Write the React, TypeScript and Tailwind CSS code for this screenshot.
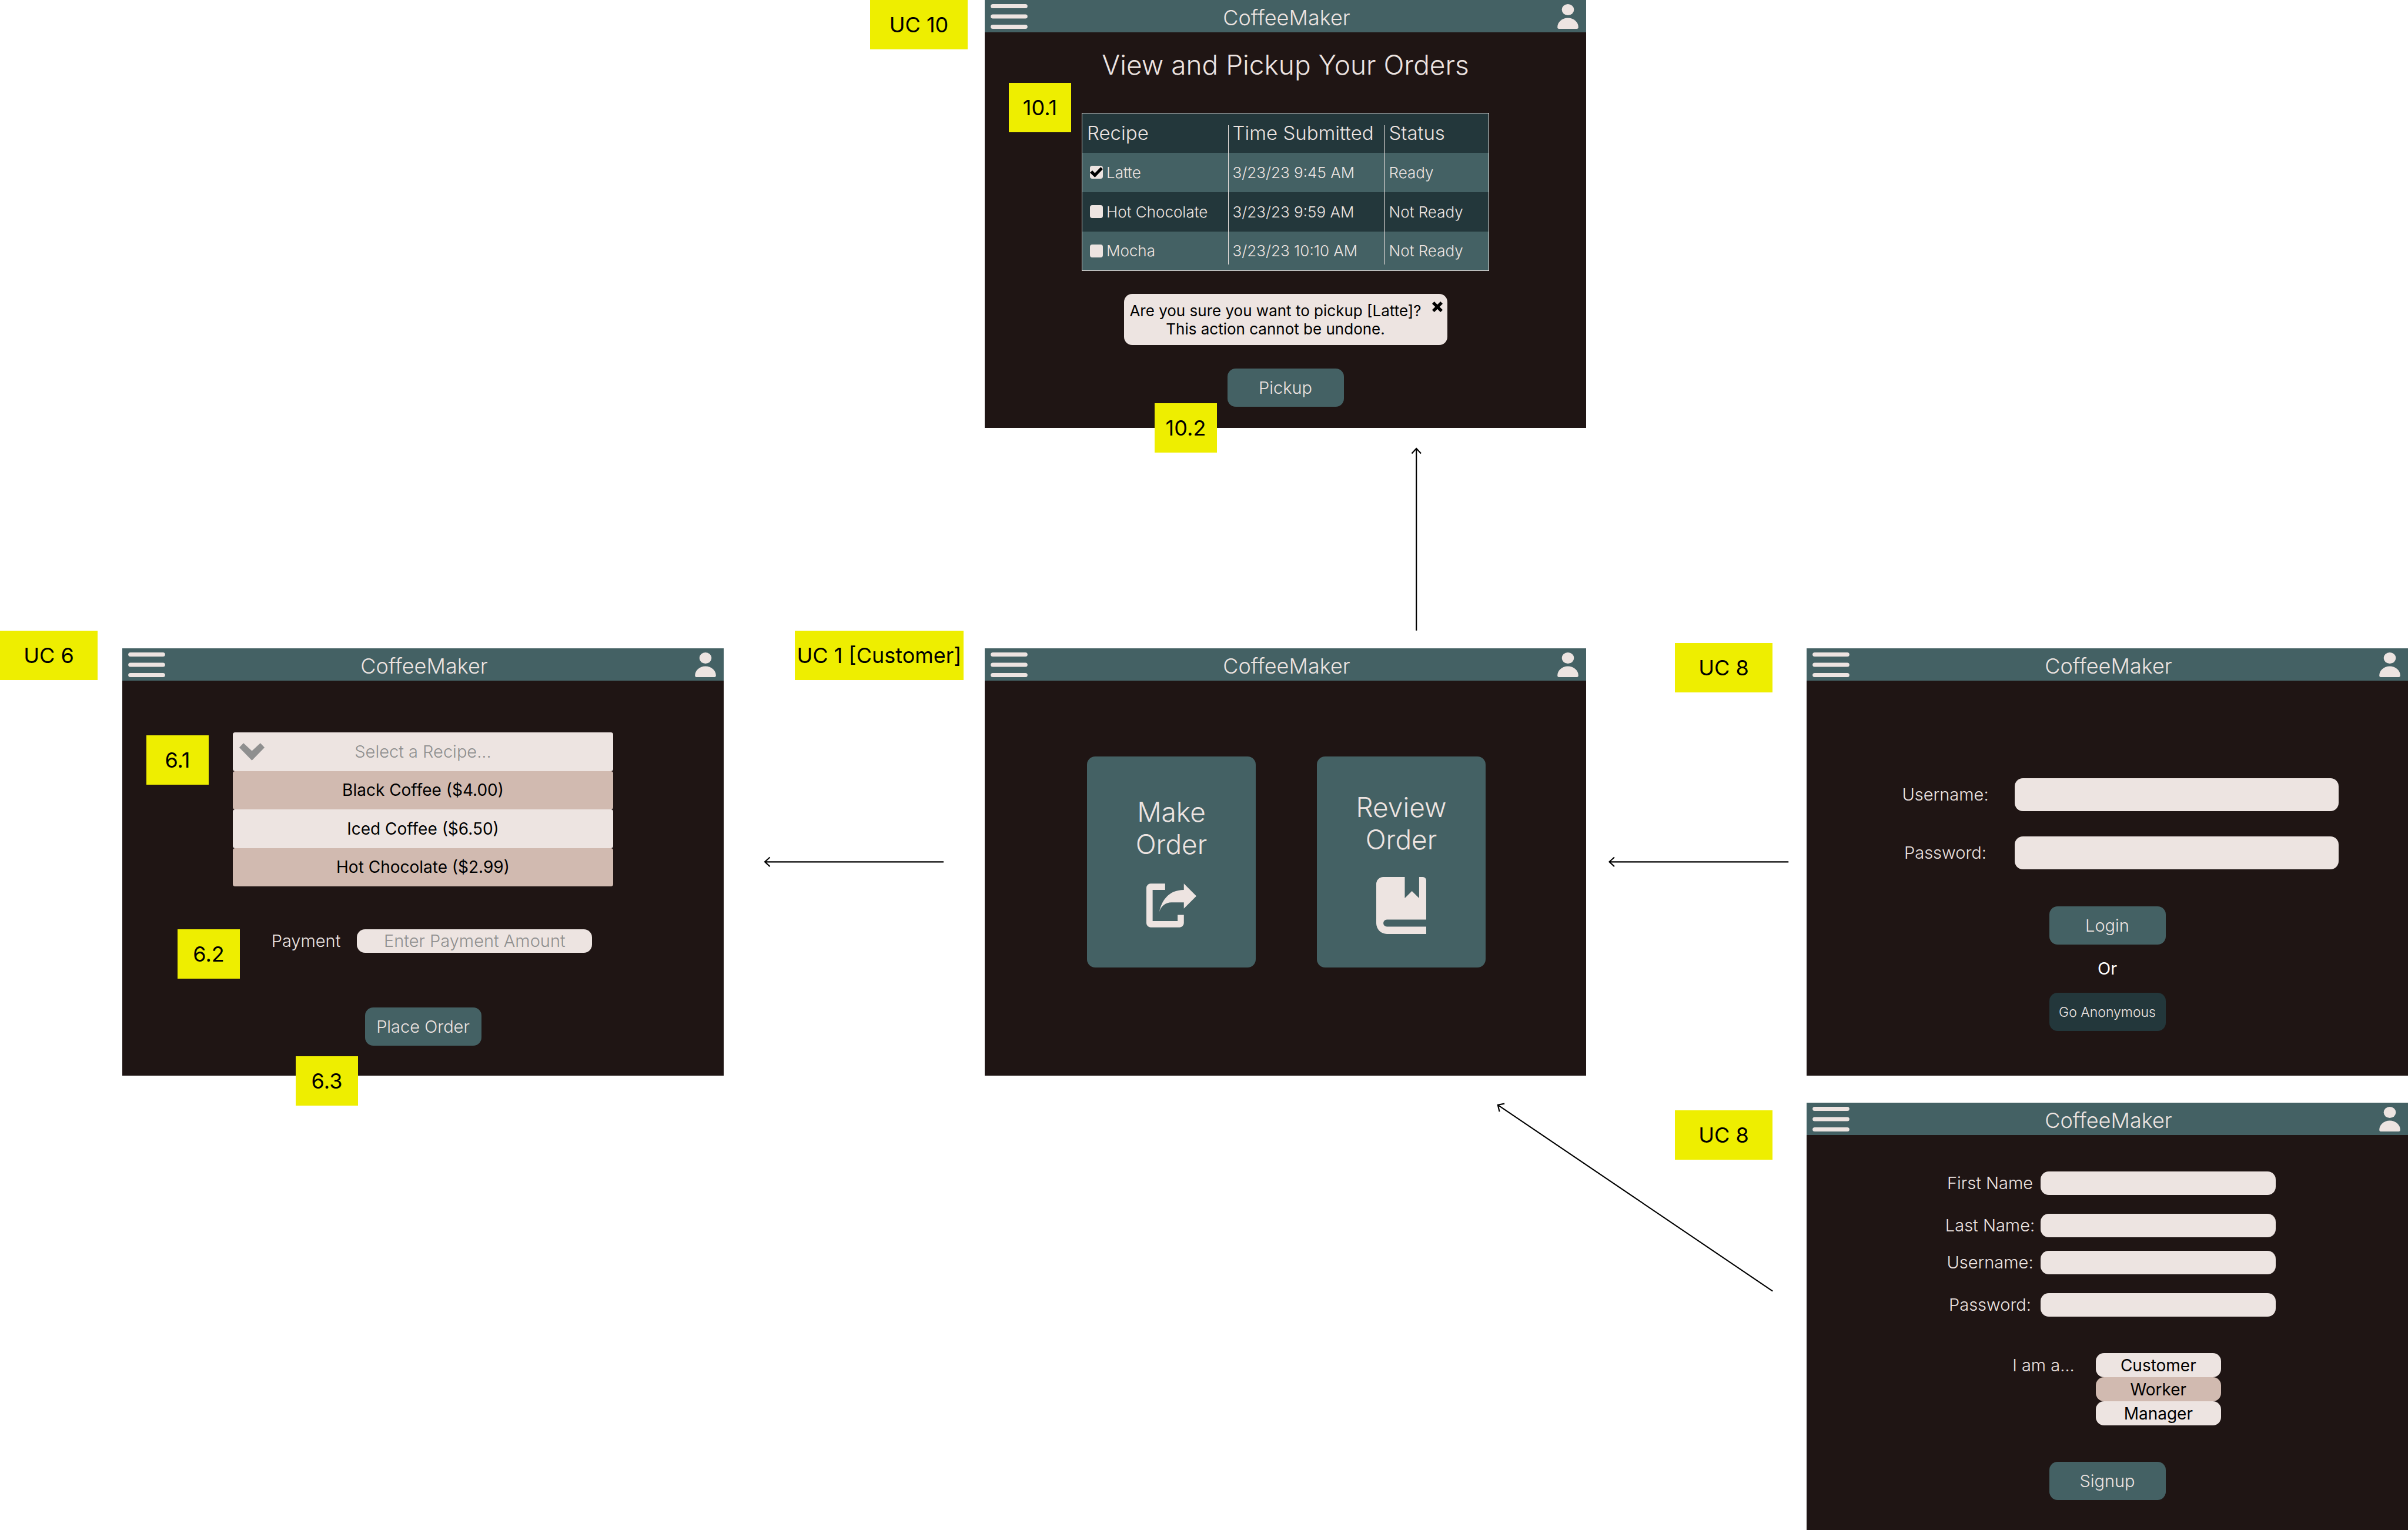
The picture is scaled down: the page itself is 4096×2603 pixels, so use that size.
import React from "react";

const paper = "bg-[#ede4e1]";

type NoteProps = { children: React.ReactNode; place: string };

function Note({ children, place }: NoteProps) {
  return (
    <span
      className={`absolute z-10 flex h-[84px] items-center justify-center bg-[#eeee00] text-[36px] font-normal whitespace-nowrap text-black ${place}`}
    >
      {children}
    </span>
  );
}

function Screen({ children, area }: { children: React.ReactNode; area: string }) {
  return (
    <section className={`relative flex flex-col bg-[#1f1514] ${area}`}>
      <header className="flex h-[55px] items-center justify-between bg-[#446164] pr-[13px] pl-[10px]">
        <button type="button" aria-label="Menu">
          <svg viewBox="0 0 88 59" className="h-[42px] w-[63px]" fill="#ede4e1">
            <rect y="0" width="88" height="10" rx="5" />
            <rect y="24.5" width="88" height="10" rx="5" />
            <rect y="49" width="88" height="10" rx="5" />
          </svg>
        </button>
        <h2 className="pt-1 pr-5 text-[36px] leading-none">CoffeeMaker</h2>
        <button type="button" aria-label="Account">
          <svg viewBox="0 0 50 59" className="h-[42px] w-[36px]" fill="#ede4e1">
            <ellipse cx="25" cy="13.3" rx="14.5" ry="13.3" />
            <path d="M25 33C39 33 50 43 50 55V56a3 3 0 0 1-3 3H3a3 3 0 0 1-3-3V55C0 43 11 33 25 33Z" />
          </svg>
        </button>
      </header>
      {children}
    </section>
  );
}

function Action({ children, tone = "bg-[#446164] text-[29px]" }: { children: React.ReactNode; tone?: string }) {
  return (
    <button type="button" className={`h-[65px] w-[198px] rounded-[14px] font-light ${tone}`}>
      {children}
    </button>
  );
}

const orders = [
  { recipe: "Latte", time: "3/23/23 9:45 AM", status: "Ready", picked: true },
  { recipe: "Hot Chocolate", time: "3/23/23 9:59 AM", status: "Not Ready", picked: false },
  { recipe: "Mocha", time: "3/23/23 10:10 AM", status: "Not Ready", picked: false },
];

const rule = "relative pl-2 before:absolute before:left-0 before:w-px before:bg-[#ede4e1]";

function Orders() {
  return (
    <Screen area="col-start-4 row-start-1">
      <Note place="-left-[195px] top-0 w-[166px]">UC 10</Note>
      <Note place="left-[41px] top-[141px] w-[106px]">10.1</Note>
      <Note place="left-[289px] top-[686px] w-[106px]">10.2</Note>
      <div className="flex flex-col items-center pt-[28px]">
        <h1 className="text-[46px] leading-[55px]">View and Pickup Your Orders</h1>
        <table className="mt-[54px] w-[693px] table-fixed border-collapse border border-[#ede4e1] text-left">
          <thead className="bg-[#23373b] text-[33px]">
            <tr className="h-[67px]">
              <th className="w-[248px] pl-2 font-light">Recipe</th>
              <th className={`w-[266px] font-light before:top-5 before:bottom-0 ${rule}`}>Time Submitted</th>
              <th className={`font-light before:top-5 before:bottom-0 ${rule}`}>Status</th>
            </tr>
          </thead>
          <tbody className="text-[26px]">
            {orders.map((o, i) => {
              const span = i === 2 ? "before:top-0 before:bottom-2.5" : "before:inset-y-0";
              return (
                <tr key={o.recipe} className={`h-[67px] ${i % 2 ? "bg-[#23373b]" : "bg-[#446164]"}`}>
                  <td className="pl-[13px]">
                    <label className="flex items-center gap-[6px]">
                      <span className="relative flex size-[22px]">
                        <input
                          type="checkbox"
                          defaultChecked={o.picked}
                          className={`peer size-[22px] appearance-none rounded-[4px] ${paper}`}
                        />
                        <svg
                          viewBox="0 0 30 30"
                          className="pointer-events-none absolute inset-0 hidden size-[22px] peer-checked:block"
                        >
                          <path d="M0 16L5.500 11 11.500 17 25 3 30 8 11.500 27Z" />
                        </svg>
                      </span>
                      {o.recipe}
                    </label>
                  </td>
                  <td className={`${rule} ${span}`}>{o.time}</td>
                  <td className={`${rule} ${span}`}>{o.status}</td>
                </tr>
              );
            })}
          </tbody>
        </table>
        <div
          role="dialog"
          aria-label="Confirm pickup"
          className={`relative mt-[39px] flex h-[87px] w-[550px] items-center rounded-[14px] pr-[42px] pl-2 text-center text-[26px] leading-[31px] font-normal text-black ${paper}`}
        >
          <p className="grow whitespace-nowrap">
            Are you sure you want to pickup [Latte]?
            <br />
            This action cannot be undone.
          </p>
          <button type="button" aria-label="Close" className="absolute top-[13px] right-[8px]">
            <svg viewBox="0 0 24 24" className="size-[18px]">
              <path d="M5 0L12 7 19 0 24 5 17 12 24 19 19 24 12 17 5 24 0 19 7 12 0 5Z" />
            </svg>
          </button>
        </div>
        <div className="mt-[40px]">
          <Action>Pickup</Action>
        </div>
      </div>
    </Screen>
  );
}

const recipes = ["Black Coffee ($4.00)", "Iced Coffee ($6.50)", "Hot Chocolate ($2.99)"];

function MakeOrder() {
  return (
    <Screen area="col-start-2 row-start-3">
      <Note place="-left-[208px] -top-[30px] w-[166px]">UC 6</Note>
      <Note place="left-[41px] top-[148px] w-[106px]">6.1</Note>
      <Note place="left-[94px] top-[478px] w-[106px]">6.2</Note>
      <Note place="left-[295px] top-[694px] w-[106px]">6.3</Note>
      <div className="flex flex-col items-center pt-[88px] text-[29px] leading-[40px]">
        <div className="flex h-[262px] w-[647px] flex-col text-black">
          <div className={`relative flex flex-1 rounded-[4px] text-[#8f8f8f] ${paper}`}>
            <select
              aria-label="Recipe"
              className="w-full appearance-none text-center font-light [text-align-last:center]"
            >
              <option>Select a Recipe...</option>
            </select>
            <svg
              viewBox="0 0 60 41"
              className="pointer-events-none absolute top-[18px] left-[11px] h-[30px] w-[43px]"
              fill="#8f8f8f"
            >
              <path d="M10 0L30 18.500 50 0 60 10.500 30 41 0 10.500Z" />
            </svg>
          </div>
          <ul className="flex flex-[3] flex-col text-[28px] font-normal">
            {recipes.map((r, i) => (
              <li key={r} className="flex flex-1">
                <button type="button" className={`w-full rounded-[4px] ${i % 2 ? paper : "bg-[#d1bab0]"}`}>
                  {r}
                </button>
              </li>
            ))}
          </ul>
        </div>
        <label className="mt-[73px] flex items-center gap-[28px] pl-[30px]">
          Payment
          <input
            type="text"
            placeholder="Enter Payment Amount"
            className={`h-[40px] w-[400px] rounded-[14px] text-center font-light text-black placeholder:text-[#8f8f8f] ${paper}`}
          />
        </label>
        <div className="mt-[93px]">
          <Action>Place Order</Action>
        </div>
      </div>
    </Screen>
  );
}

function Home() {
  return (
    <Screen area="col-start-4 row-start-3">
      <Note place="-left-[323px] -top-[30px] w-[287px]">UC 1 [Customer]</Note>
      <div className="flex justify-center gap-[104px] pt-[129px] pl-[3px] text-[46px] leading-[55px]">
        <button
          type="button"
          className="flex h-[359px] w-[287px] flex-col items-center rounded-[14px] bg-[#446164] pt-[67px] font-light"
        >
          <span className="w-[170px]">Make Order</span>
          <svg viewBox="0 0 120 105" className="mt-[39px] h-[75px] w-[85px]" fill="#ede4e1">
            <path d="M45 0H10A10 10 0 0 0 0 10V95A10 10 0 0 0 10 105H80A10 10 0 0 0 90 95V75H75V90H15V15H45Z" />
            <path d="M90 0L120 30 90 60V45H60C46 45 35 54 31 68 36 43 52 15 90 15Z" />
          </svg>
        </button>
        <button
          type="button"
          className="flex h-[359px] w-[287px] flex-col items-center rounded-[14px] bg-[#446164] pt-[59px] font-light"
        >
          <span className="w-[170px]">Review Order</span>
          <svg viewBox="0 0 120 137" className="mt-[36px] h-[97px] w-[85px]" fill="#ede4e1">
            <path d="M17 0H68.500V51L85.700 34 103 51V0H112A8 8 0 0 1 120 8V102.500H25.500A8.500 8.500 0 0 0 25.500 119.500H120V137H25.600A25.600 25.600 0 0 1 0 111.400V17A17 17 0 0 1 17 0Z" />
          </svg>
        </button>
      </div>
    </Screen>
  );
}

function Login() {
  return (
    <Screen area="col-start-6 row-start-3">
      <Note place="-left-[224px] -top-[9px] w-[166px]">UC 8</Note>
      <div className="flex flex-col items-center pt-[166px] text-[29px] leading-[40px]">
        <div className="flex flex-col gap-[43px] pl-[38px]">
          {["Username:", "Password:"].map((name) => (
            <label key={name} className="flex items-center gap-[38px]">
              <span className="w-[160px] text-center">{name}</span>
              <input
                type={name === "Password:" ? "password" : "text"}
                className={`h-[56px] w-[551px] rounded-[14px] px-4 text-black ${paper}`}
              />
            </label>
          ))}
        </div>
        <div className="mt-[63px] flex flex-col items-center">
          <Action>Login</Action>
          <p className="flex h-[82px] items-center font-normal text-white">Or</p>
          <Action tone="bg-[#23373b] text-[23px]">Go Anonymous</Action>
        </div>
      </div>
    </Screen>
  );
}

const signup = [
  { label: "First Name", type: "text", gap: "" },
  { label: "Last Name:", type: "text", gap: "mt-8" },
  { label: "Username:", type: "text", gap: "mt-[23px]" },
  { label: "Password:", type: "password", gap: "mt-8" },
];

function Signup() {
  return (
    <Screen area="col-start-6 row-start-5">
      <Note place="-left-[224px] top-[13px] w-[166px]">UC 8</Note>
      <div className="flex flex-col items-center pt-[62px] text-[29px] leading-[40px]">
        <div className="flex flex-col pl-[7px]">
          {signup.map((f) => (
            <label key={f.label} className={`flex items-center gap-[6px] ${f.gap}`}>
              <span className="w-[160px] text-center">{f.label}</span>
              <input type={f.type} className={`h-[40px] w-[400px] rounded-[14px] px-4 text-black ${paper}`} />
            </label>
          ))}
        </div>
        <div className="mt-[62px] flex items-start gap-[36px] pl-[32px]">
          <span id="role" className="leading-[41px]">
            I am a...
          </span>
          <ul aria-labelledby="role" className="w-[213px] text-[28px] font-normal text-black">
            {["Customer", "Worker", "Manager"].map((r, i) => (
              <li key={r}>
                <button
                  type="button"
                  className={`flex h-[41px] w-full items-center justify-center rounded-[14px] ${i % 2 ? "bg-[#d1bab0]" : paper}`}
                >
                  {r}
                </button>
              </li>
            ))}
          </ul>
        </div>
        <div className="mt-[62px]">
          <Action>Signup</Action>
        </div>
      </div>
    </Screen>
  );
}

function Arrows() {
  return (
    <svg
      viewBox="0 0 5765 3664"
      className="pointer-events-none absolute inset-0 size-full"
      fill="none"
      stroke="#000000"
      strokeWidth="3"
    >
      <path d="M3391 1510V1074M3380 1086L3391 1074 3402 1086" />
      <path d="M2259 2064H1831M1843 2053L1831 2064 1843 2075" />
      <path d="M4282 2064H3853M3865 2053L3853 2064 3865 2075" />
      <path d="M4244 3092L3586 2646M3590 2662L3586 2646 3602 2643" />
    </svg>
  );
}

export default function App() {
  return (
    <main className="relative grid min-h-screen w-full grid-cols-[208fr_1023fr_444fr_1023fr_375fr_1023fr] grid-rows-[728fr_375fr_727fr_46fr_727fr] overflow-hidden bg-white font-['Inter',sans-serif] font-light text-[#ede4e1]">
      <Arrows />
      <Orders />
      <MakeOrder />
      <Home />
      <Login />
      <Signup />
    </main>
  );
}
